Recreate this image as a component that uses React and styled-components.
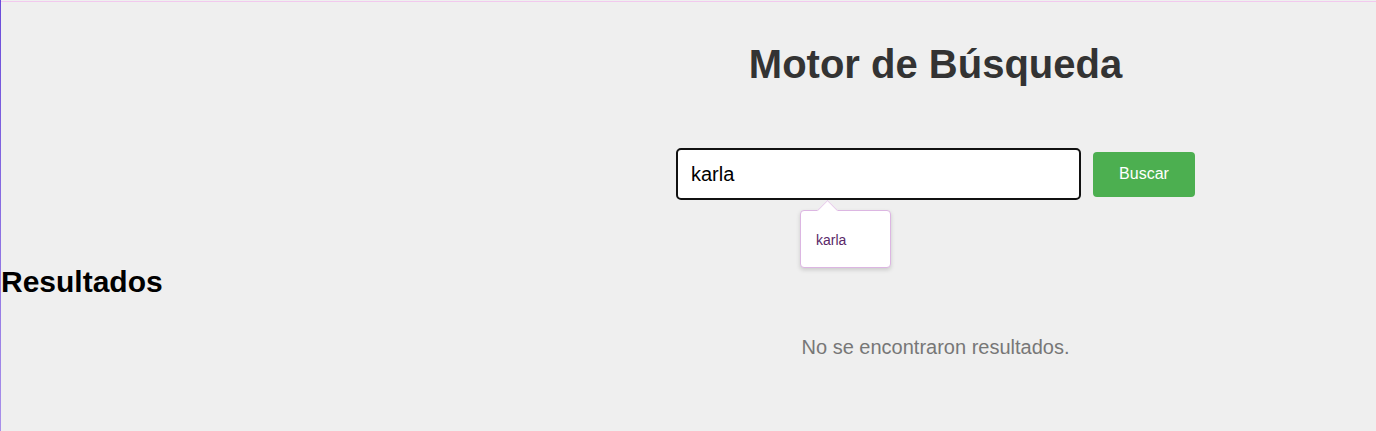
import styled, { createGlobalStyle } from 'styled-components';

const GlobalStyle = createGlobalStyle`
    html, body {
        margin: 0;
        padding: 0;
        background: #efefef;
    }

    body {
        font-family: "Liberation Sans", Arial, sans-serif;
    }
`

function App() {
    return (
        <>
            <GlobalStyle />
            <Page>
                <TopRule />
                <Layout>
                    <Sidebar>
                        <ResultsTitle>Resultados</ResultsTitle>
                    </Sidebar>
                    <Main>
                        <Title>Motor de Búsqueda</Title>
                        <SearchRow>
                            <InputWrap>
                                <SearchInput type="text" defaultValue="karla" />
                                <Suggestion>
                                    <span>karla</span>
                                </Suggestion>
                            </InputWrap>
                            <SearchButton>Buscar</SearchButton>
                        </SearchRow>
                        <EmptyText>No se encontraron resultados.</EmptyText>
                    </Main>
                </Layout>
            </Page>
        </>
    );
}

const Page = styled.div`
    min-height: 431px;
    box-sizing: border-box;
    border-left: 1px solid;
    border-image: linear-gradient(to bottom, #6a4bda, #a990ea) 1;
    padding-top: 1px;
`

const TopRule = styled.div`
    height: 1px;
    background: #f2c9ee;
`

const Layout = styled.div`
    display: flex;
`

const Sidebar = styled.div`
    width: 494px;
    flex-shrink: 0;
    padding-top: 263px;
`

const ResultsTitle = styled.h2`
    margin: 0;
    font-size: 30px;
    font-weight: bold;
    color: #000;
`

const Main = styled.div`
    flex: 1;
    display: flex;
    flex-direction: column;
    align-items: center;
`

const Title = styled.h1`
    margin: 40px 0 0;
    font-size: 40px;
    font-weight: bold;
    color: #333;
`

const SearchRow = styled.div`
    display: flex;
    align-items: center;
    gap: 12px;
    margin-top: 61px;
`

const InputWrap = styled.div`
    position: relative;
`

const SearchInput = styled.input`
    box-sizing: border-box;
    width: 405px;
    height: 52px;
    padding: 0 13px;
    border: 2px solid #111;
    border-radius: 5px;
    background: #fff;
    font-family: "Liberation Sans", Arial, sans-serif;
    font-size: 20px;
    color: #000;
    outline: none;
`

const Suggestion = styled.div`
    position: absolute;
    left: 124px;
    top: 62px;
    box-sizing: border-box;
    width: 91px;
    height: 58px;
    padding: 21px 0 0 15px;
    background: #fff;
    border: 1px solid #dcb6e2;
    border-radius: 4px;
    box-shadow: 0 2px 4px rgba(0, 0, 0, 0.15);
    font-family: "Liberation Sans", Arial, sans-serif;
    font-size: 14px;
    color: #5a2868;

    &::before {
        content: '';
        position: absolute;
        left: 19px;
        top: -8px;
        width: 14px;
        height: 14px;
        background: #fff;
        border-left: 1px solid #e6cbe9;
        border-top: 1px solid #e6cbe9;
        transform: rotate(45deg);
    }

    span {
        position: relative;
    }
`

const SearchButton = styled.button`
    width: 102px;
    height: 45px;
    border: none;
    border-radius: 4px;
    background: #4caf50;
    color: #fff;
    font-family: "Liberation Sans", Arial, sans-serif;
    font-size: 16px;
    cursor: pointer;
`

const EmptyText = styled.p`
    margin: 136px 0 0;
    font-size: 20px;
    color: #777;
`

export default App;
